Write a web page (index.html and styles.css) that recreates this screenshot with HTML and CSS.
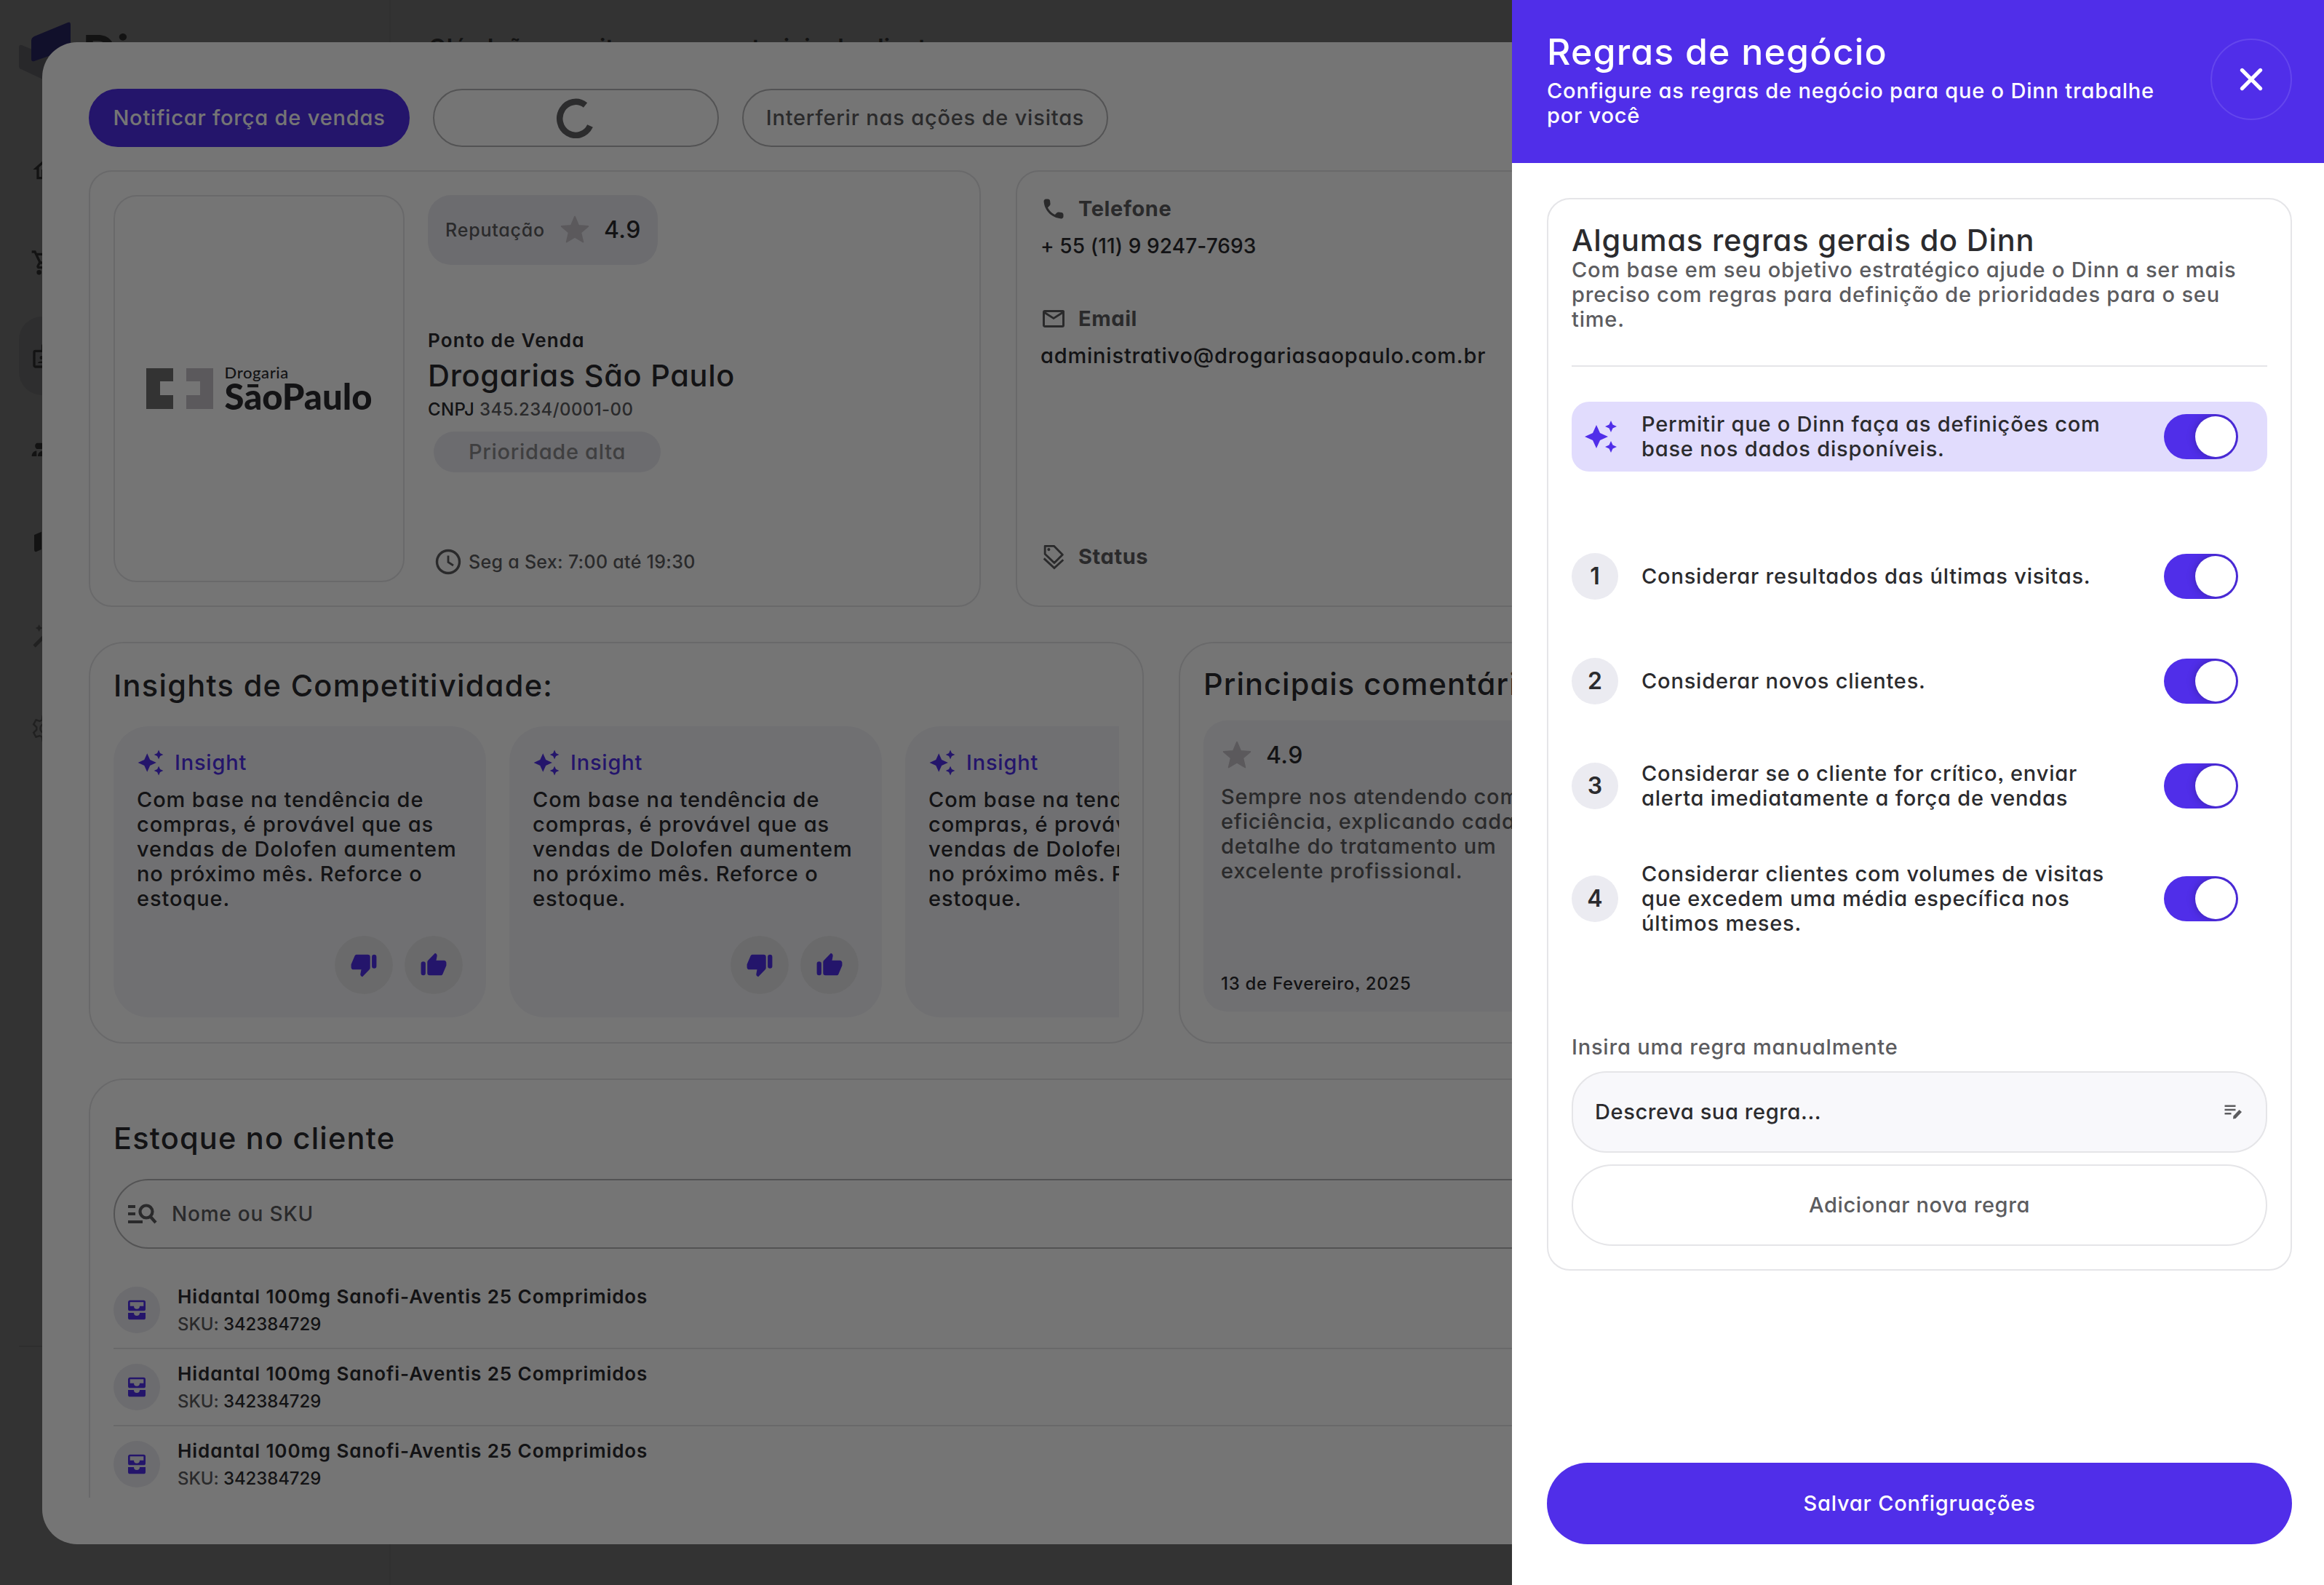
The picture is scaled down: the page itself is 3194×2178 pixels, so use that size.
FILE: index.html
```html
<!DOCTYPE html>
<html lang="pt-BR">

<head>
    <meta charset="UTF-8">
    <meta name="viewport" content="width=device-width, initial-scale=1.0">
    <title>Dinn - Regras de negócio</title>
    <link rel="stylesheet" href="styles.css">
</head>

<body>
    <!-- Icon sprite -->
    <svg class="sprite" aria-hidden="true">
        <symbol id="i-spark" viewBox="0 0 24 24"><path d="M19 9l1.25-2.75L23 5l-2.75-1.25L19 1l-1.25 2.75L15 5l2.75 1.25zM11.5 9.500L9 4 6.500 9.500 1 12l5.500 2.500L9 20l2.500-5.500L17 12zM19 15l-1.250 2.750L15 19l2.750 1.250L19 23l1.250-2.750L23 19l-2.750-1.250z"/></symbol>
        <symbol id="i-star" viewBox="0 0 24 24"><path d="M12 17.270L18.180 21l-1.640-7.030L22 9.240l-7.190-.61L12 2 9.190 8.630 2 9.240l5.460 4.730L5.820 21z" stroke-width="1" stroke-linejoin="round"/></symbol>
        <symbol id="i-up" viewBox="0 0 24 24"><path d="M1 11a2 2 0 0 1 4 0v8a2 2 0 0 1-4 0zM6.500 9.500c0-.6.2-1 .6-1.400L13.200 1.800c1.200.3 2 1.300 1.700 2.600L14.200 8H21c1.100 0 2 .9 2 2v2.500L19.800 20c-.3.700-1 1-1.800 1H8.500a2 2 0 0 1-2-2z"/></symbol>
        <symbol id="i-box" viewBox="0 0 24 24"><path fill-rule="evenodd" d="M5 2h14a2 2 0 0 1 2 2v7a2 2 0 0 1-2 2H5a2 2 0 0 1-2-2V4c0-1.100.9-2 2-2zm0 2v4h4a3 3 0 0 0 6 0h4V4zM3 15h6a3 3 0 0 0 6 0h6v5a2 2 0 0 1-2 2H5a2 2 0 0 1-2-2z"/></symbol>
    </svg>

    <div class="app">
        <aside class="rail">
            <div class="brand">
                <svg class="brand-mark" viewBox="0 0 80 90">
                    <path d="M0 35q0-4 4-3l52 22v32q0 4-4 2L3 65q-3-1-3-4z" fill="#c8c8d4"/>
                    <path d="M17 26q0-4 4-6L67 1q4-2 4 3v28q0 4-4 6L21 54q-4 1-4-3z" fill="#5b50d8"/>
                </svg>
                <span class="brand-name">Dinn</span>
            </div>
            <nav class="rail-nav">
                <a class="rail-item"><svg viewBox="0 0 24 24"><path d="M12 5.700l5 4.500V18h-2v-6H9v6H7v-7.800zM12 3L2 12h3v8h6v-6h2v6h6v-8h3z"/></svg></a>
                <a class="rail-item"><svg viewBox="0 0 24 24"><path d="M15.550 13c.750 0 1.410-.410 1.750-1.030l3.580-6.490A1 1 0 0 0 20.010 4H5.210l-.94-2H1v2h2l3.600 7.590-1.350 2.440C4.520 15.370 5.480 17 7 17h12v-2H7l1.100-2zM6.160 6h12.150l-2.760 5H8.530zM7 18a2 2 0 1 0 0 4 2 2 0 0 0 0-4z"/></svg></a>
                <a class="rail-item active"><svg viewBox="0 0 24 24"><path fill-rule="evenodd" d="M20 7h-5V4a2 2 0 0 0-2-2h-2a2 2 0 0 0-2 2v3H4a2 2 0 0 0-2 2v11c0 1.100.9 2 2 2h16a2 2 0 0 0 2-2V9a2 2 0 0 0-2-2zM4 20V9h16v11zM9 12a1.500 1.500 0 1 1 0 3 1.500 1.500 0 0 1 0-3zm-3 6c0-2 6-2 6 0z"/></svg></a>
                <a class="rail-item"><svg viewBox="0 0 24 24"><path d="M5 7h4a2 2 0 0 1 0 5H5a3 3 0 0 1 0-5zM1 18c0-3 2-4.500 4-4.500V18zM6 18c0-3 2-4.500 5-4.500V18z"/></svg></a>
                <a class="rail-item"><svg viewBox="0 0 24 24"><path d="M3 6l6-2.500V18l-4.500 2Q3 20 3 18zM11 4l8 3v13l-8-3z"/></svg></a>
                <a class="rail-item faint"><svg viewBox="0 0 24 24"><path d="M2 20L14 8l2 2L4 22zM7 3l1 2 2 1-2 1-1 2-1-2-2-1 2-1z"/></svg></a>
                <a class="rail-item faint"><svg viewBox="0 0 24 24"><path d="M12 8a4 4 0 1 0 0 8 4 4 0 0 0 0-8zM10 2h4l.5 3 2 1 3-1 2 3.500L19 11v2l2.500 2.500-2 3.500-3-1-2 1-.5 3h-4l-.5-3-2-1-3 1-2-3.500L5 13v-2L2.500 8.500l2-3.500 3 1 2-1z" fill="none" stroke="currentColor" stroke-width="1.500"/></svg></a>
            </nav>
            <hr class="rail-line">
        </aside>
        <main class="page">
            <h1 class="page-title">Olá, João, monitore seus materiais do cliente</h1>
        </main>
    </div>

    <div class="shade shade-app"></div>

    <section class="modal">
        <div class="modal-body">
            <div class="actions">
                <button class="btn btn-fill">Notificar força de vendas</button>
                <button class="btn btn-loading">
                    <svg class="spinner" viewBox="0 0 56 56"><path d="M40.500 10.500A22 23 0 1 0 47 39" fill="none" stroke="#606063" stroke-width="8.500"/></svg>
                </button>
                <button class="btn">Interferir nas ações de visitas</button>
            </div>

            <div class="row info-row">
                <article class="card store">
                    <div class="store-logo">
                        <svg class="logo-mark" viewBox="0 0 92 56">
                            <path d="M0 0h37v18H19v19h18v19H0z" fill="#707070"/>
                            <path d="M55 0h37v56H55V37h19V18H55z" fill="#c6c2c8"/>
                        </svg>
                        <div class="logo-text">
                            <span class="logo-small">Drogaria</span>
                            <span class="logo-big">SāoPaulo</span>
                        </div>
                    </div>
                    <div class="store-data">
                        <div class="reputation">
                            <span class="rep-label">Reputação</span>
                            <svg class="star"><use href="#i-star"/></svg>
                            <span class="score">4.9</span>
                        </div>
                        <div class="store-main">
                            <span class="store-kind">Ponto de Venda</span>
                            <h2 class="title store-name">Drogarias São Paulo</h2>
                            <span class="store-doc"><b>CNPJ</b> 345.234/0001-00</span>
                            <span class="priority">Prioridade alta</span>
                        </div>
                        <div class="hours">
                            <svg viewBox="0 0 36 36"><circle cx="18" cy="18" r="15.500" fill="none" stroke="#5c5c5f" stroke-width="3.400"/><path d="M18 9.500V18.500L25 23" fill="none" stroke="#5c5c5f" stroke-width="2.800"/></svg>
                            <span>Seg a Sex: 7:00 até 19:30</span>
                        </div>
                    </div>
                </article>

                <article class="card contact">
                    <div class="contact-item">
                        <div class="contact-label">
                            <svg viewBox="0 0 24 24"><path d="M19.230 15.260l-2.540-.29a1.990 1.990 0 0 0-1.640.57l-1.840 1.840a15.050 15.050 0 0 1-6.590-6.590l1.850-1.850c.430-.43.640-1.030.570-1.640l-.29-2.520a2 2 0 0 0-1.990-1.770H5.030c-1.130 0-2.070.94-2 2.070.53 8.540 7.360 15.360 15.890 15.890 1.130.07 2.070-.87 2.070-2v-1.730c.01-1.010-.75-1.860-1.760-1.980z"/></svg>
                            Telefone
                        </div>
                        <p class="contact-value phone">+ 55 (11) 9 9247-7693</p>
                    </div>
                    <div class="contact-item">
                        <div class="contact-label">
                            <svg viewBox="0 0 24 24"><path d="M22 5c0-.6-.9-1-2-1H4a2 2 0 0 0-2 2v12c0 1.100.9 2 2 2h16a2 2 0 0 0 2-2zM19 6l-7 4.500L5 6zm1 12H4V7.700l8 5 8-5z" fill-rule="evenodd"/></svg>
                            Email
                        </div>
                        <p class="contact-value">administrativo@drogariasaopaulo.com.br</p>
                    </div>
                    <div class="contact-item contact-status">
                        <div class="contact-label">
                            <svg viewBox="0 0 32 38"><g fill="none" stroke="#5c5c5f" stroke-width="3"><path d="M3.500 3.500h13L29 16 17 28 3.500 15z" stroke-linejoin="round"/><path d="M2 21.500L17 35.500 30 23.500"/></g><circle cx="9" cy="8.500" r="2.200"/></svg>
                            Status
                        </div>
                    </div>
                </article>
            </div>

            <div class="row feed-row">
                <article class="card insights">
                    <h2 class="title">Insights de Competitividade:</h2>
                    <div class="insight-list">
                        <div class="insight">
                            <div class="insight-tag"><svg><use href="#i-spark"/></svg>Insight</div>
                            <p class="insight-text">Com base na tendência de<br>compras, é provável que as<br>vendas de Dolofen aumentem<br>no próximo mês. Reforce o<br>estoque.</p>
                            <div class="votes">
                                <button class="vote"><svg class="down"><use href="#i-up"/></svg></button>
                                <button class="vote"><svg><use href="#i-up"/></svg></button>
                            </div>
                        </div>
                        <div class="insight">
                            <div class="insight-tag"><svg><use href="#i-spark"/></svg>Insight</div>
                            <p class="insight-text">Com base na tendência de<br>compras, é provável que as<br>vendas de Dolofen aumentem<br>no próximo mês. Reforce o<br>estoque.</p>
                            <div class="votes">
                                <button class="vote"><svg class="down"><use href="#i-up"/></svg></button>
                                <button class="vote"><svg><use href="#i-up"/></svg></button>
                            </div>
                        </div>
                        <div class="insight">
                            <div class="insight-tag"><svg><use href="#i-spark"/></svg>Insight</div>
                            <p class="insight-text">Com base na tendência de<br>compras, é provável que as<br>vendas de Dolofen aumentem<br>no próximo mês. Reforce o<br>estoque.</p>
                        </div>
                    </div>
                </article>

                <article class="card comments">
                    <h2 class="title">Principais comentários</h2>
                    <div class="comment">
                        <div class="comment-score">
                            <svg class="star"><use href="#i-star"/></svg>
                            <span class="score">4.9</span>
                        </div>
                        <p class="comment-text">Sempre nos atendendo com<br>eficiência, explicando cada<br>detalhe do tratamento um<br>excelente profissional.</p>
                        <span class="comment-date">13 de Fevereiro, 2025</span>
                    </div>
                </article>
            </div>

            <article class="card stock">
                <h2 class="title">Estoque no cliente</h2>
                <div class="search">
                    <svg viewBox="0 0 40 30"><g fill="none" stroke="#5c5c5f" stroke-width="4.200"><path d="M0 5h10M0 15h10M0 26h20"/><circle cx="25" cy="12" r="8.500"/><path d="M30 18l8 9"/></g></svg>
                    <span>Nome ou SKU</span>
                </div>
                <ul class="products">
                    <li class="product">
                        <span class="product-icon"><svg><use href="#i-box"/></svg></span>
                        <div><strong>Hidantal 100mg Sanofi-Aventis 25 Comprimidos</strong><small>SKU: <b>342384729</b></small></div>
                    </li>
                    <li class="product">
                        <span class="product-icon"><svg><use href="#i-box"/></svg></span>
                        <div><strong>Hidantal 100mg Sanofi-Aventis 25 Comprimidos</strong><small>SKU: <b>342384729</b></small></div>
                    </li>
                    <li class="product">
                        <span class="product-icon"><svg><use href="#i-box"/></svg></span>
                        <div><strong>Hidantal 100mg Sanofi-Aventis 25 Comprimidos</strong><small>SKU: <b>342384729</b></small></div>
                    </li>
                </ul>
            </article>
        </div>
    </section>

    <div class="shade shade-modal"></div>

    <aside class="drawer">
        <header class="drawer-header">
            <div>
                <h2 class="drawer-title">Regras de negócio</h2>
                <p class="drawer-sub">Configure as regras de negócio para que o Dinn trabalhe<br>por você</p>
            </div>
            <button class="close"><svg viewBox="0 0 28 28"><path d="M3 3l22 22M25 3L3 25" stroke="#fff" stroke-width="4.500" stroke-linecap="round"/></svg></button>
        </header>

        <div class="rules">
            <h3 class="title">Algumas regras gerais do Dinn</h3>
            <p class="rules-intro">Com base em seu objetivo estratégico ajude o Dinn a ser mais<br>preciso com regras para definição de prioridades para o seu<br>time.</p>
            <hr class="rules-line">

            <div class="rule rule-main">
                <svg class="rule-spark"><use href="#i-spark"/></svg>
                <p class="rule-text">Permitir que o Dinn faça as definições com<br>base nos dados disponíveis.</p>
                <span class="toggle"></span>
            </div>

            <div class="rule-list">
                <div class="rule">
                    <span class="rule-number">1</span>
                    <p class="rule-text">Considerar resultados das últimas visitas.</p>
                    <span class="toggle"></span>
                </div>
                <div class="rule">
                    <span class="rule-number">2</span>
                    <p class="rule-text">Considerar novos clientes.</p>
                    <span class="toggle"></span>
                </div>
                <div class="rule">
                    <span class="rule-number">3</span>
                    <p class="rule-text">Considerar se o cliente for crítico, enviar<br>alerta imediatamente a força de vendas</p>
                    <span class="toggle"></span>
                </div>
                <div class="rule">
                    <span class="rule-number">4</span>
                    <p class="rule-text">Considerar clientes com volumes de visitas<br>que excedem uma média específica nos<br>últimos meses.</p>
                    <span class="toggle"></span>
                </div>
            </div>

            <label class="manual-label">Insira uma regra manualmente</label>
            <div class="manual-input">
                <span>Descreva sua regra...</span>
                <svg viewBox="0 0 24 20"><path d="M0 1.700h15M0 7h15M0 12.300h9" stroke="#5c5c5f" stroke-width="2.400"/><path d="M11.500 19.500l.5-4 8-8.500 3.500 3-8.500 9z"/></svg>
            </div>
            <button class="add-rule">Adicionar nova regra</button>
        </div>

        <button class="save">Salvar Configruações</button>
    </aside>
</body>

</html>
```
FILE: styles.css
```css
* {
    margin: 0;
    padding: 0;
    box-sizing: border-box;
}

body {
    width: 3194px;
    height: 2178px;
    overflow: hidden;
    position: relative;
    font-family: Inter, "Liberation Sans", sans-serif;
    font-feature-settings: "cv11", "ss03";
    font-size: 29px;
    font-weight: 500;
    line-height: 34px;
    letter-spacing: .8px;
    color: #2b2b2e;
    white-space: nowrap;
}

button {
    font: inherit;
    font-feature-settings: inherit;
    letter-spacing: inherit;
    background: none;
    border: none;
    color: inherit;
}

svg {
    display: block;
    flex: none;
    fill: currentColor;
}

.sprite {
    position: absolute;
    width: 0;
    height: 0;
}

/* App behind the dialogs */
.app {
    display: flex;
    height: 2178px;
    background: #fff;
    color: #646464;
}

.rail {
    width: 537px;
    padding: 30px 26px 0;
    border-right: 2px solid #f1f1f4;
}

.brand {
    display: flex;
    gap: 8px;
    height: 149px;
}

.brand-mark {
    width: 80px;
    height: 90px;
}

.brand-name {
    font-size: 64px;
    font-weight: 700;
    line-height: 84px;
    letter-spacing: 0;
}

.rail-nav {
    display: flex;
    flex-direction: column;
    gap: 20px;
}

.rail-item {
    display: flex;
    align-items: center;
    height: 108px;
    padding-left: 16px;
    border-radius: 32px;
}

.rail-item svg {
    width: 40px;
    height: 40px;
}

.rail-item.active {
    background: #e8e8ea;
}

.rail-item.faint {
    color: #a8a8a8;
}

.rail-line {
    margin-top: 794px;
    border: 0;
    border-top: 2px solid #e5e5e8;
}

.page {
    padding: 44px 52px;
}

.page-title {
    font-size: 32px;
    font-weight: 600;
    line-height: 44px;
    letter-spacing: .1px;
}

/* Overlays */
.shade {
    position: absolute;
    inset: 0;
}

.shade-app {
    background: rgba(0, 0, 0, .565);
}

.shade-modal {
    background: rgba(0, 0, 0, .54);
}

/* Client modal */
.modal {
    position: absolute;
    left: 58px;
    top: 58px;
    width: 3078px;
    height: 2064px;
    padding: 64px;
    background: #fff;
    border-radius: 48px;
}

.modal-body {
    height: 1936px;
    overflow: hidden;
}

.actions {
    display: flex;
    gap: 32px;
    margin-bottom: 32px;
}

.btn {
    height: 80px;
    width: 503px;
    border: 2px solid #b6b6b8;
    border-radius: 40px;
    color: #5c5c5f;
}

.btn-fill {
    width: 441px;
    background: #502ee9;
    border-color: #502ee9;
    color: #fff;
}

.btn-loading {
    width: 393px;
    display: flex;
    align-items: center;
    justify-content: center;
}

.spinner {
    width: 56px;
    height: 56px;
}

.row {
    display: flex;
    gap: 48px;
    margin-bottom: 48px;
}

.card {
    border: 2px solid #e5e5e8;
    border-radius: 48px;
    padding: 32px;
}

.title {
    font-size: 41.5px;
    font-weight: 500;
    line-height: 48px;
    letter-spacing: 1.1px;
}

.info-row .card {
    height: 600px;
    border-radius: 32px;
}

.store {
    width: 1226px;
    display: flex;
    gap: 32px;
}

.store-logo {
    width: 400px;
    border: 2px solid #e5e5e8;
    border-radius: 32px;
    display: flex;
    justify-content: center;
    align-items: center;
    gap: 16px;
}

.logo-mark {
    width: 92px;
    height: 56px;
}

.logo-text {
    display: flex;
    flex-direction: column;
    font-family: Lato, sans-serif;
    height: 66px;
    letter-spacing: 0;
}

.logo-small {
    font-size: 22px;
    line-height: 22px;
    letter-spacing: .6px;
}

.logo-big {
    font-size: 49px;
    font-weight: 900;
    line-height: 42px;
}

.store-data {
    display: flex;
    flex-direction: column;
    align-items: flex-start;
}

.reputation {
    display: flex;
    align-items: center;
    width: 316px;
    height: 96px;
    padding-left: 24px;
    background: #ebebf1;
    border-radius: 32px;
    margin-bottom: 84px;
}

.rep-label {
    width: 156px;
    font-size: 25px;
    letter-spacing: .8px;
    color: #5c5c5f;
}

.star {
    width: 44px;
    height: 44px;
    fill: #c6c2c8;
    stroke: #c6c2c8;
}

.score {
    font-size: 32px;
    margin-left: 18px;
    letter-spacing: .4px;
}

.store-main {
    display: flex;
    flex-direction: column;
    align-items: flex-start;
    margin-bottom: 101px;
}

.store-kind {
    font-size: 26px;
    font-weight: 600;
    line-height: 40px;
    letter-spacing: 1.2px;
}

.store-name {
    margin: 4px 0 3px;
    letter-spacing: .7px;
}

.store-doc {
    font-size: 24px;
    line-height: 40px;
    letter-spacing: .4px;
    margin-bottom: 10px;
    color: #5c5c5f;
}

.store-doc b {
    font-weight: 500;
    color: #2b2b2e;
}

.priority {
    width: 312px;
    height: 56px;
    margin-left: 8px;
    line-height: 56px;
    letter-spacing: .7px;
    text-align: center;
    border-radius: 28px;
    background: #ebebf1;
    color: #8a8a8d;
}

.hours {
    display: flex;
    align-items: center;
    gap: 10px;
    margin-left: 10px;
    height: 44px;
    font-size: 25px;
    letter-spacing: .3px;
    color: #5c5c5f;
}

.hours svg {
    width: 36px;
    height: 36px;
}

.contact {
    flex: 1;
    display: flex;
    flex-direction: column;
    gap: 66px;
}

.info-row .contact {
    padding-top: 34px;
}

.contact-item {
    flex: none;
}

.contact-label {
    display: flex;
    align-items: center;
    gap: 16px;
    height: 34px;
    margin-bottom: 17px;
    font-weight: 700;
    letter-spacing: .6px;
    color: #5c5c5f;
}

.contact-label svg {
    width: 36px;
    height: 36px;
}

.contact-status {
    margin-top: 176px;
}

.phone {
    font-size: 28px;
    letter-spacing: .1px;
}

.feed-row .card {
    height: 552px;
}

.insights {
    width: 1450px;
}

.insights .title {
    margin: 2px 0 32px;
    letter-spacing: 1.3px;
}

.insight-list {
    display: flex;
    gap: 32px;
    overflow: hidden;
}

.insight {
    flex: none;
    display: flex;
    flex-direction: column;
    width: 512px;
    height: 400px;
    padding: 33px 32px 32px;
    border-radius: 48px;
    background: #f5f5f9;
}

.insight-tag {
    display: flex;
    align-items: center;
    gap: 14px;
    margin-bottom: 17px;
    color: #502ee9;
}

.insight-tag svg {
    width: 38px;
    height: 38px;
    margin: -2px 0;
}

.insight-text {
    letter-spacing: .9px;
}

.votes {
    display: flex;
    justify-content: flex-end;
    gap: 16px;
    margin-top: auto;
}

.vote {
    display: flex;
    align-items: center;
    justify-content: center;
    width: 80px;
    height: 80px;
    border-radius: 50%;
    background: #e8e8ea;
    color: #502ee9;
}

.vote svg {
    width: 38px;
    height: 38px;
}

.vote .down {
    transform: rotate(180deg);
}

.comments {
    flex: 1;
}

.comments .title {
    margin-bottom: 26px;
}

.comment {
    display: flex;
    flex-direction: column;
    height: 400px;
    padding: 24px 24px 22px;
    border-radius: 32px;
    background: #f5f5f9;
}

.comment-score {
    display: flex;
    align-items: center;
    height: 48px;
    margin-bottom: 16px;
}

.comment-text {
    color: #5c5c5f;
}

.comment-date {
    margin-top: auto;
    font-size: 24px;
    line-height: 32px;
    letter-spacing: .7px;
}

.stock {
    height: 700px;
}

.stock .title {
    margin: 24px 0 32px;
    letter-spacing: 1.2px;
}

.search {
    display: flex;
    align-items: center;
    gap: 20px;
    height: 96px;
    padding-left: 18px;
    margin-bottom: 32px;
    border: 2px solid #b6b6b8;
    border-radius: 48px;
    font-size: 28px;
    color: #5c5c5f;
}

.search svg {
    width: 40px;
    height: 30px;
}

.products {
    list-style: none;
}

.product {
    display: flex;
    align-items: center;
    gap: 24px;
    height: 106px;
    padding: 8px 0;
    border-bottom: 2px solid #e5e5e8;
}

.product-icon {
    display: flex;
    align-items: center;
    justify-content: center;
    width: 64px;
    height: 64px;
    border-radius: 50%;
    background: #ebebf1;
    color: #502ee9;
}

.product-icon svg {
    width: 32px;
    height: 32px;
}

.product strong,
.product small {
    display: block;
    line-height: 38px;
}

.product strong {
    padding-top: 2px;
    font-size: 26px;
    font-weight: 600;
    letter-spacing: .93px;
}

.product small {
    font-size: 24px;
    letter-spacing: -.1px;
    color: #5c5c5f;
}

.product b {
    font-weight: 500;
    color: #2b2b2e;
}

/* Rules drawer */
.drawer {
    position: absolute;
    top: 0;
    right: 0;
    width: 1116px;
    height: 2178px;
    display: flex;
    flex-direction: column;
    background: #fff;
}

.drawer-header {
    display: flex;
    justify-content: space-between;
    height: 224px;
    padding: 42px 44px 0 48px;
    background: #502ee9;
    color: #fff;
}

.drawer-title {
    font-size: 50px;
    font-weight: 500;
    line-height: 58px;
    letter-spacing: 1.2px;
    margin-bottom: 8px;
}

.close {
    display: flex;
    align-items: center;
    justify-content: center;
    width: 112px;
    height: 112px;
    margin-top: 11px;
    border: 2px solid #6446ed;
    border-radius: 50%;
}

.close svg {
    width: 32px;
    height: 32px;
}

.rules {
    display: flex;
    flex-direction: column;
    width: 1024px;
    height: 1474px;
    margin: 48px 0 0 48px;
    padding: 32px;
    border: 2px solid #e5e5e8;
    border-radius: 32px;
}

.rules .title {
    letter-spacing: .8px;
}

.rules-intro {
    color: #5c5c5f;
}

.rules-line {
    margin: 46px 0 48px;
    border: 0;
    border-top: 2px solid #e5e5e8;
}

.rule {
    display: flex;
    align-items: center;
    min-height: 96px;
    padding: 8px 40px 8px 0;
}

.rule-main {
    padding-left: 16px;
    border-radius: 24px;
    background: #e1dcfd;
}

.rule-spark {
    width: 48px;
    height: 48px;
    margin-right: 32px;
    fill: #502ee9;
}

.rule-text {
    flex: 1;
}

.toggle {
    display: flex;
    justify-content: flex-end;
    width: 102px;
    height: 62px;
    padding: 3px;
    border-radius: 31px;
    background: #502ee9;
    overflow: hidden;
}

.toggle::after {
    content: "";
    width: 56px;
    height: 56px;
    border-radius: 50%;
    background: #fff;
    box-shadow: 0 0 12px rgba(0, 0, 0, .25);
}

.rule-list {
    display: flex;
    flex-direction: column;
    gap: 48px;
    margin: 96px 0 128px;
}

.rule-number {
    width: 64px;
    height: 64px;
    margin-right: 32px;
    border-radius: 50%;
    background: #ebebf1;
    font-size: 32px;
    font-weight: 600;
    line-height: 64px;
    letter-spacing: 0;
    text-align: center;
}

.manual-label {
    margin-bottom: 16px;
    color: #5c5c5f;
}

.manual-input {
    display: flex;
    align-items: center;
    justify-content: space-between;
    height: 112px;
    padding: 0 32px 0 30px;
    margin-bottom: 16px;
    border: 2px solid #e5e5e8;
    border-radius: 48px;
    letter-spacing: .6px;
    background: #f8f8fb;
}

.manual-input svg {
    width: 25px;
    height: 20px;
    color: #5c5c5f;
}

.add-rule {
    height: 112px;
    border: 2px solid #e5e5e8;
    border-radius: 56px;
    letter-spacing: .6px;
    color: #5c5c5f;
}

.save {
    width: 1024px;
    height: 112px;
    margin: auto 0 56px 48px;
    border-radius: 56px;
    background: #502ee9;
    color: #fff;
}
```
